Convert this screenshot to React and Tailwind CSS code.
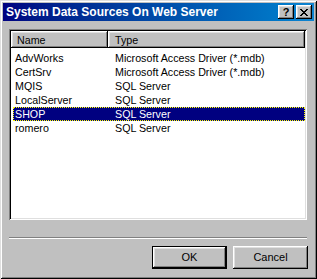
const ROWS = [
  { name: 'AdvWorks', type: 'Microsoft Access Driver (*.mdb)' },
  { name: 'CertSrv', type: 'Microsoft Access Driver (*.mdb)' },
  { name: 'MQIS', type: 'SQL Server' },
  { name: 'LocalServer', type: 'SQL Server' },
  { name: 'SHOP', type: 'SQL Server', selected: true },
  { name: 'romero', type: 'SQL Server' },
];

const raised =
  'shadow-[inset_-1px_-1px_#000,inset_1px_1px_#fff,inset_-2px_-2px_#808080,inset_2px_2px_#dfdfdf]';

function TitleButton({ children }) {
  return (
    <div className={`w-[16px] h-[14px] bg-[#c0c0c0] flex items-center justify-center ${raised}`}>
      {children}
    </div>
  );
}

export default function App() {
  return (
    <div className="w-[317px] h-[279px] bg-[#c0c0c0] p-[3px] flex flex-col font-['Liberation_Sans',Arial,sans-serif] text-[10.7px] text-black shadow-[inset_1px_1px_#dfdfdf,inset_-1px_-1px_#000,inset_2px_2px_#fff,inset_-2px_-2px_#808080]">
      {/* Title bar */}
      <div className="h-[18px] flex items-center justify-between pl-[3px] pr-[2px] bg-gradient-to-r from-[#000080] to-[#1084d0]">
        <span className="text-white font-bold text-[12px] leading-none">System Data Sources On Web Server</span>
        <div className="flex gap-[2px]">
          <TitleButton>
            <span className="font-bold text-[11px] leading-none mt-[1px]">?</span>
          </TitleButton>
          <TitleButton>
            <svg width="8" height="7" viewBox="0 0 8 7" shapeRendering="crispEdges">
              <path d="M0 0h2v1h-2zM6 0h2v1h-2zM1 1h2v1h-2zM5 1h2v1h-2zM2 2h4v1h-4zM3 3h2v1h-2zM2 4h4v1h-4zM1 5h2v1h-2zM5 5h2v1h-2zM0 6h2v1h-2zM6 6h2v1h-2z" fill="#000" />
            </svg>
          </TitleButton>
        </div>
      </div>

      <div className="px-[6px] pt-[8px] flex flex-col">
        {/* List view */}
        <div className="w-[298px] h-[191px] bg-white p-[2px] shadow-[inset_1px_1px_#808080,inset_-1px_-1px_#fff,inset_2px_2px_#000,inset_-2px_-2px_#dfdfdf]">
          <div className="flex h-[17px]">
            <div className={`w-[97px] bg-[#c0c0c0] flex items-center pl-[6px] pt-[1px] ${raised}`}>Name</div>
            <div className={`w-[197px] bg-[#c0c0c0] flex items-center pl-[7px] pt-[1px] ${raised}`}>Type</div>
          </div>
          <div className="pt-[3px] pl-[2px]">
            {ROWS.map((r) => (
              <div
                key={r.name}
                className={`flex h-[14px] items-center ${
                  r.selected
                    ? 'bg-[#000080] text-white outline-1 outline-dotted outline-[#ffff00] -outline-offset-1'
                    : ''
                }`}
              >
                <span className="w-[102px] pl-[2px]">{r.name}</span>
                <span>{r.type}</span>
              </div>
            ))}
          </div>
        </div>

        {/* Separator */}
        <div className="w-[298px] mt-[17px] border-t border-t-[#808080] border-b border-b-white" />

        {/* Buttons */}
        <div className="w-[299px] mt-[7px] flex justify-end gap-[6px]">
          <button className="w-[75px] h-[23px] bg-[#c0c0c0] border border-black text-[11px] shadow-[inset_-1px_-1px_#000,inset_1px_1px_#fff,inset_-2px_-2px_#808080,inset_2px_2px_#dfdfdf]">
            OK
          </button>
          <button className={`w-[75px] h-[23px] bg-[#c0c0c0] text-[11px] ${raised}`}>Cancel</button>
        </div>
      </div>
    </div>
  );
}
